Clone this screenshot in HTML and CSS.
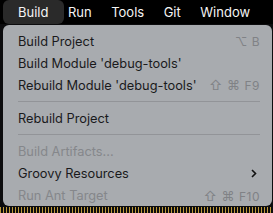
FILE: index.html
```html
<!DOCTYPE html>
<html>
<head>
<meta charset="utf-8">
<link rel="stylesheet" href="styles.css">
</head>
<body>
<div class="screen">
  <div class="menubar">
    <div class="mb-item active">Build</div>
    <div class="mb-item">Run</div>
    <div class="mb-item">Tools</div>
    <div class="mb-item">Git</div>
    <div class="mb-item">Window</div>
  </div>
  <div class="panel">
    <div class="row"><span class="label">Build Project</span><span class="sc">⌥ B</span></div>
    <div class="row"><span class="label">Build Module 'debug-tools'</span></div>
    <div class="row"><span class="label">Rebuild Module 'debug-tools'</span><span class="sc"><span class="sym">⇧ ⌘</span> F9</span></div>
    <div class="sep"></div>
    <div class="row"><span class="label">Rebuild Project</span></div>
    <div class="sep"></div>
    <div class="row disabled"><span class="label">Build Artifacts...</span></div>
    <div class="row"><span class="label">Groovy Resources</span>
      <svg class="chev" width="6" height="9" viewBox="0 0 6 9"><path d="M1 1 L4.5 4.5 L1 8" fill="none" stroke="#111" stroke-width="1.6"/></svg>
    </div>
    <div class="row disabled"><span class="label">Run Ant Target</span><span class="sc"><span class="sym">⇧ ⌘</span> F10</span></div>
  </div>
  <div class="strip"></div>
</div>
</body>
</html>
```
FILE: styles.css
```css
html, body {
  margin: 0;
  padding: 0;
  background: #000;
}
.screen {
  width: 273px;
  height: 213px;
  overflow: hidden;
  background: #0c0c0e;
  font-family: Inter, "Noto Sans", sans-serif;
}
.menubar {
  height: 24px;
  background: #000;
  display: flex;
  align-items: stretch;
  padding-left: 3px;
  gap: 19.5px;
}
.mb-item {
  color: #f4f4f4;
  font-size: 13px;
  font-weight: 400;
  display: flex;
  align-items: center;
}
.mb-item.active {
  background: #2a2a2a;
  border-radius: 6px;
  padding: 0 16px 0 15px;
  margin-right: -16px;
}
.panel {
  margin: 1px 1px 0 3px;
  height: 181px;
  background: #a8abaf;
  border-radius: 6px;
  padding: 5px 12px 0 15px;
  box-sizing: border-box;
}
.row {
  height: 22px;
  display: flex;
  align-items: center;
  justify-content: space-between;
  font-size: 12.8px;
  color: #1a1a1c;
}
.row.disabled {
  color: #85878b;
}
.sc {
  color: #808286;
  font-size: 12px;
  letter-spacing: 0.5px;
}
.sym {
  font-size: 13px;
}
.chev {
  margin-right: 3px;
}
.sep {
  height: 1px;
  background: #929498;
  margin: 5px 0;
}
.sep + .row.disabled {
  margin-bottom: 0.5px;
}
.strip {
  height: 7px;
  margin-top: 1px;
  background: repeating-linear-gradient(90deg, #c09a3a 0 1px, #0c0c0e 1px 3px);
}
```
